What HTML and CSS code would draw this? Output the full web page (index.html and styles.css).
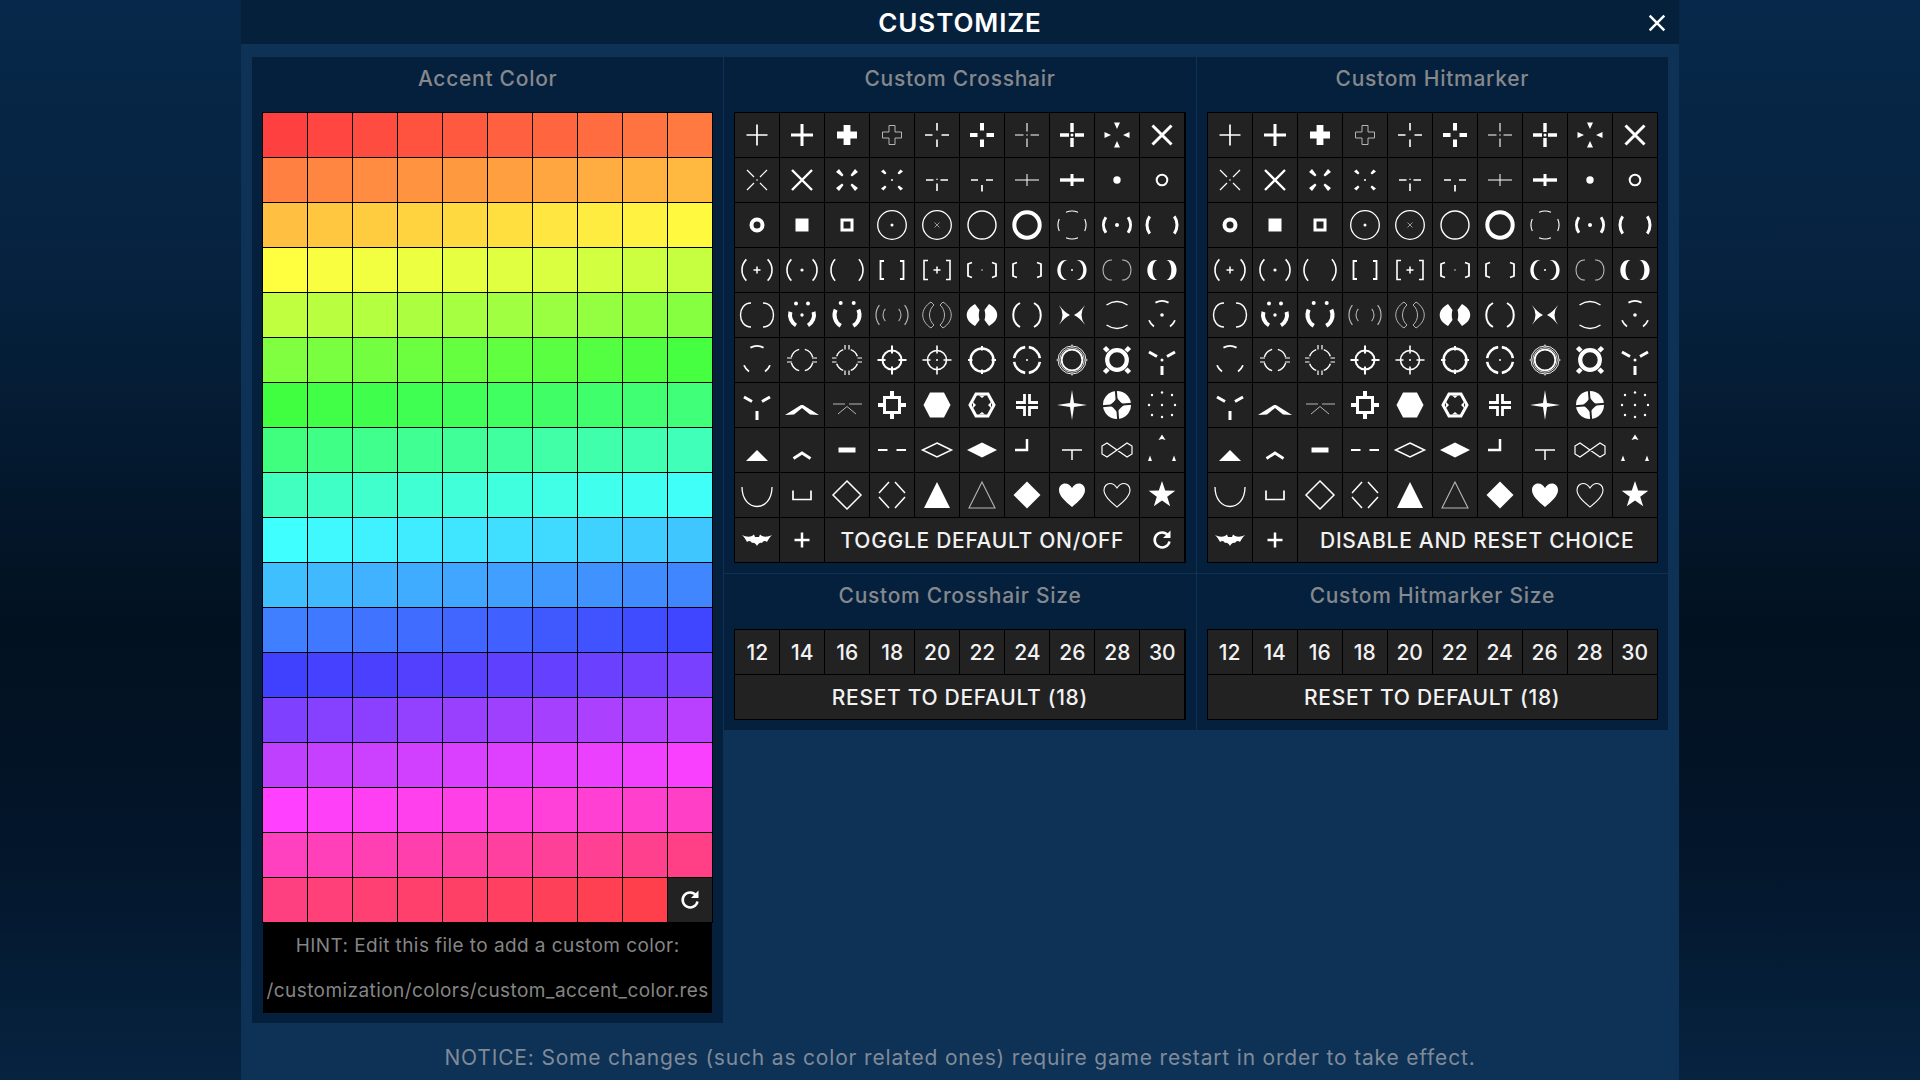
FILE: index.html
```html
<!DOCTYPE html>
<html>
  <head>
    <meta name="viewport" content="width=device-width,initial-scale=1.0">
    <title>Customize</title>
    <link rel="stylesheet" href="styles.css">
  </head>
  <body>
    <div class="dialog">
      <div class="titlebar">
        <h1>CUSTOMIZE</h1>
        <button class="close">
          <svg viewBox="-8 -8 16 16"><path d="M-6.5-6.5L6.5 6.5M6.5-6.5L-6.5 6.5"/></svg>
        </button>
      </div>
      <div class="content">
        <div class="columns">
          <div class="panel">
            <h2>Accent Color</h2>
            <div class="grid" id="colors"></div>
            <div class="hint">
              <p>HINT: Edit this file to add a custom color:</p>
              <p>/customization/colors/custom_accent_color.res</p>
            </div>
          </div>
          <div class="stack">
            <div class="panel">
              <h2>Custom Crosshair</h2>
              <div class="grid" id="crosshair"></div>
            </div>
            <div class="panel">
              <h2>Custom Crosshair Size</h2>
              <div class="grid" id="crosshair-size"></div>
            </div>
          </div>
          <div class="stack">
            <div class="panel">
              <h2>Custom Hitmarker</h2>
              <div class="grid" id="hitmarker"></div>
            </div>
            <div class="panel">
              <h2>Custom Hitmarker Size</h2>
              <div class="grid" id="hitmarker-size"></div>
            </div>
          </div>
        </div>
        <p class="notice">NOTICE: Some changes (such as color related ones) require game restart in order to take effect.</p>
      </div>
    </div>
    <script src="page.js"></script>
  </body>
</html>
```

FILE: styles.css
```css
body { margin: 0; height: 100vh; overflow: hidden; display: flex; justify-content: center; background: linear-gradient(180deg, #07284a, #06223f 25%, #021120 58%, #03152a 78%, #072340); font-family: Inter, "Liberation Sans", sans-serif; }
h1, h2, p { margin: 0; font-weight: normal; }
button { border: none; padding: 0; font: inherit; color: inherit; }

.dialog { width: 1438px; display: flex; flex-direction: column; }
.titlebar { height: 44px; flex: none; display: flex; align-items: center; justify-content: center; position: relative; background: #05203b; }
.titlebar h1 { font-size: 26px; font-weight: 600; color: #fff; letter-spacing: 0.9px; }
.close { position: absolute; right: 13px; top: 14px; width: 18px; height: 18px; background: none; }
.close svg { display: block; fill: none; stroke: #fff; stroke-width: 2.2; }

.content { flex: 1; display: flex; flex-direction: column; padding: 13px 11px 0; background: #0e3156; }
.columns { display: grid; grid-template-columns: repeat(3, 1fr); gap: 1px; align-items: start; }
.stack { display: flex; flex-direction: column; gap: 1px; }
.panel { padding: 0 11px 11px; background: #05203c; }
.panel h2 { height: 56px; display: flex; align-items: center; justify-content: center; padding-bottom: 13px; box-sizing: border-box; font-size: 21px; font-weight: 500; color: #85888c; letter-spacing: 0.72px; }

.grid { display: grid; grid-template-columns: repeat(10, 44px); grid-auto-rows: 44px; gap: 1px; background: #000; outline: 1px solid #000; }
.cell { display: flex; align-items: center; justify-content: center; background: #222; color: #f2f2f2; font-size: 21px; font-weight: 500; }
.swatch { display: block; }
.wide-7, .wide-8, .wide-10 { letter-spacing: 0.7px; }
.wide-7 { grid-column: span 7; }
.wide-8 { grid-column: span 8; }
.wide-10 { grid-column: span 10; }

.ico { width: 44px; height: 44px; fill: none; stroke: #fff; stroke-width: 1.5; }
.ico .solid { fill: #fff; stroke: none; }
.ico .dim { stroke: #b5b5b5; }

.hint { margin-top: 1px; margin-bottom: -1px; background: #000; color: #858585; font-size: 19px; font-weight: 500; line-height: 45px; text-align: center; white-space: nowrap; letter-spacing: 0.42px; }
.notice { flex: 1; display: flex; align-items: center; justify-content: center; padding-top: 12px; font-size: 21px; color: #7f8b99; letter-spacing: 0.82px; }
```

FILE: page.js
```js
// helpers for the icons, (0,0) is the middle of a cell
function line(d, w, cls) { return `<path d="${d}" stroke-width="${w}" class="${cls || ''}"/>`; }
function solid(d) { return `<path d="${d}" class="solid"/>`; }
function dot(x, y, r) { return `<circle cx="${x}" cy="${y}" r="${r}" class="solid"/>`; }
function ring(r, w, cls) { return `<circle r="${r}" stroke-width="${w}" class="${cls || ''}"/>`; }
function arc(r, a, b, w, cls) {
  var x1 = r * Math.cos(a * Math.PI / 180), y1 = r * Math.sin(a * Math.PI / 180);
  var x2 = r * Math.cos(b * Math.PI / 180), y2 = r * Math.sin(b * Math.PI / 180);
  return line(`M${x1.toFixed(2)} ${y1.toFixed(2)}A${r} ${r} 0 0 1 ${x2.toFixed(2)} ${y2.toFixed(2)}`, w, cls);
}
function parens(r, span, w, cls) { return arc(r, -span, span, w, cls) + arc(r, 180 - span, 180 + span, w, cls); }
function gapCross(a, b, w) { return line(`M${-a} 0H${-b}M${b} 0H${a}M0 ${-a}V${-b}M0 ${b}V${a}`, w); }
// crescent pair, inner is how far in the hollow side of the C reaches
function crescents(inner) {
  return solid(`M-4.500-10C-18-12-18 12-4.500 10C-${inner} 8-${inner}-8-4.500-10ZM4.500-10C18-12 18 12 4.500 10C${inner} 8 ${inner}-8 4.500-10Z`);
}
function threeArcs() { return arc(14, -118, -62, 1.8) + arc(14, 22, 55, 1.8) + arc(14, 125, 158, 1.8); }
function yShape() { return line('M-13-8L-5-3.500M13-8L5-3.500M0 6V15', 3); }

var HEART = 'M0 12C-7 6-13 1-13-5C-13-9-10-11.500-7-11.500C-4-11.500-1.500-9.500 0-7C1.500-9.500 4-11.500 7-11.500C10-11.500 13-9 13-5C13 1 7 6 0 12Z';
var BAT = 'M-15-5C-11-3-8-3-5-4L-3-5.500L-2-3H2L3-5.500L5-4C8-3 11-3 15-5C12-2 11 0 10 2C8 0 6 1 5 3C3 2 1 4 0 6C-1 4-3 2-5 3C-6 1-8 0-10 2C-11 0-12-2-15-5Z';
var REFRESH = line('M6.200-4.500A7.500 7.500 0 1 0 7.500 1.500', 2.5) + solid('M8.500-9.500V-2H1Z');
var PLUS = line('M-7.500 0H7.500M0-7.500V7.500', 2.5);

var ICONS = [
  // row 1
  line('M-10.500 0H10.500M0-10.500V10.500', 1.7),
  line('M-11 0H11M0-11V11', 3),
  line('M-10 0H10M0-10V10', 6.8),
  line('M-3-9.500H3V-3H9.500V3H3V9.500H-3V3H-9.500V-3H-3Z', 1, 'dim'),
  gapCross(12, 4.5, 1.6),
  gapCross(12, 4.5, 4),
  gapCross(12, 3.5, 1.1) + dot(0, 0, 0.7),
  gapCross(12, 3, 3.4) + dot(0, 0, 1.5),
  solid('M-3-12.500H3L0-6ZM-3 12.500H3L0 6ZM-12.500-3V3L-6 0ZM12.500-3V3L6 0Z'),
  line('M-9.500-9.500L9.500 9.500M9.500-9.500L-9.500 9.500', 3),
  // row 2
  line('M-10-10L-3-3M10-10L3-3M-10 10L-3 3M10 10L3 3', 1.2) + dot(0, 0, 0.8),
  line('M-10-10L10 10M10-10L-10 10', 2.4),
  solid('M-11-8L-8-11L-3.500-5L-5-3.500ZM11-8L8-11L3.500-5L5-3.500ZM-11 8L-8 11L-3.500 5L-5 3.500ZM11 8L8 11L3.500 5L5 3.500Z'),
  solid('M-11-8.500L-8.500-10.500L-5.500-7L-7-5.500ZM11-8.500L8.500-10.500L5.500-7L7-5.500ZM-11 8.500L-8.500 10.500L-5.500 7L-7 5.500ZM11 8.500L8.500 10.500L5.500 7L7 5.500Z') + dot(0, 0, 1),
  line('M-11 0H-3.500M3.500 0H11M0 3.500V11M0-1.200V-0.200', 1.6),
  line('M-11 0H-4M4 0H11M0 5V11.500', 1.7),
  line('M-12 0H12M0-6V6', 1),
  line('M-12 0H12', 3.4) + line('M0-6V6', 3),
  dot(0, 0, 3.7),
  ring(5.3, 2),
  // row 3
  ring(5.5, 4),
  solid('M-6.500-6.500H6.500V6.500H-6.500Z'),
  line('M-5-5H5V5H-5Z', 3),
  ring(14.3, 1.3) + dot(0, 0, 1.5),
  ring(14.3, 1.3) + line('M-2.500-2.500L2.500 2.500M2.500-2.500L-2.500 2.500', 0.8, 'dim'),
  ring(14, 1.4),
  ring(12.7, 4),
  arc(14, -115, -65, 1.1) + arc(14, 65, 115, 1.1) + arc(14, 155, 205, 1.1) + arc(14, -25, 25, 1.1),
  parens(13.5, 35, 3) + dot(0, 0, 2),
  parens(15, 35, 3),
  // row 4
  parens(15, 45, 1.6) + line('M-3.500 0H3.500M0-3.500V3.500', 1.5),
  parens(15, 45, 1.6) + dot(0, 0, 1.6),
  parens(16, 42, 1.6),
  line('M-8-9H-11.500V9H-8M8-9H11.500V9H8', 1.8),
  line('M-9-9.500H-13V9.500H-9M9-9.500H13V9.500H9', 1.6) + line('M-3.500 0H3.500M0-3.500V3.500', 1.5),
  line('M-10-7.500L-14-6V6L-10 7.500M10-7.500L14-6V6L10 7.500', 1.8) + dot(0, 0, 0.7),
  line('M-10-7.500L-14-6V6L-10 7.500M10-7.500L14-6V6L10 7.500', 1.8),
  crescents(13.5) + dot(0, 0, 1),
  line('M-5-10C-17-11-17 11-5 10M5-10C17-11 17 11 5 10', 1.1, 'dim'),
  crescents(11),
  // row 5
  line('M-6-12C-20-12-20 12-6 12M6-12C20-12 20 12 6 12', 1.4),
  arc(12, 120, 195, 4) + arc(12, -15, 60, 4) + dot(-6, -11.5, 2) + dot(6, -11.5, 2) + dot(0, 0, 1.7),
  arc(12.5, 120, 205, 4) + arc(12.5, -25, 60, 4) + dot(-6.3, -12, 2) + dot(6.7, -12, 2),
  parens(16, 38, 1.2, 'dim') + parens(9, 42, 1.1, 'dim'),
  line('M-6-13C-17-6-17 6-6 13L-3 10C-9 5-9-5-3-10ZM6-13C17-6 17 6 6 13L3 10C9 5 9-5 3-10Z', 1, 'dim'),
  solid('M-7-11C-18-5-18 5-7 11L-2.500 5C-3.500 2-3.500-2-2.500-5ZM7-11C18-5 18 5 7 11L2.500 5C3.500 2 3.500-2 2.500-5Z'),
  line('M-7-12C-16-7-16 7-7 12M7-12C16-7 16 7 7 12', 2),
  solid('M-13-10Q-8-3-2 0Q-8 3-13 10Q-6 0-13-10ZM13-10Q8-3 2 0Q8 3 13 10Q6 0 13-10Z'),
  line('M-10.500-10Q0-17 10.500-10M-10.500 10Q0 17 10.500 10', 1.5),
  threeArcs() + dot(0, 0, 1.8),
  // row 6
  threeArcs(),
  arc(11, 195, 255, 1.5) + arc(11, 285, 345, 1.5) + arc(11, 15, 75, 1.5) + arc(11, 105, 165, 1.5) + line('M-15-2H-10M-15 2H-10M15-2H10M15 2H10', 1.2),
  arc(11, 200, 250, 1.5) + arc(11, 290, 340, 1.5) + arc(11, 20, 70, 1.5) + arc(11, 110, 160, 1.5) + line('M-15-2H-10.500M-15 2H-10.500M15-2H10.500M15 2H10.500M-2-15V-10.500M2-15V-10.500M-2 15V10.500M2 15V10.500', 1.2),
  ring(9.5, 2) + gapCross(14.5, 6.5, 2),
  ring(9.5, 1.6) + gapCross(14.5, 6.5, 1.6) + dot(0, 0, 1),
  ring(11.5, 2.4) + gapCross(14, 9.5, 2),
  arc(13, 8, 82, 2.6) + arc(13, 98, 172, 2.6) + arc(13, 188, 262, 2.6) + arc(13, 278, 352, 2.6) + dot(0, 0, 1),
  ring(14, 0.9) + ring(12.3, 0.8) + ring(10.3, 1.8) + gapCross(15.5, 14, 1),
  ring(9.8, 4.2) + line('M-9-9L-12.500-12.500M9-9L12.500-12.500M-9 9L-12.500 12.500M9 9L12.500 12.500', 4.5),
  yShape() + dot(0, 0, 1.5),
  // row 7
  yShape(),
  solid('M-17 10L-1 0H1L17 10L8 9.500L0 3L-8 9.500Z'),
  line('M-14-1H-2M2-1H15M-9 9L0 1.500L9 9', 1, 'dim'),
  line('M-7.500-7.500H7.500V7.500H-7.500Z', 3) + line('M0-14V-9M0 14V9M-14 0H-9M14 0H9', 4),
  solid('M-7-12.500H7L13.500 0L7 12.500H-7L-13.500 0Z'),
  line('M-6-11H6L12 0L6 11H-6L-12 0Z', 3) + solid('M-3-9.500L0-7L3-9.500ZM-3 9.500L0 7L3 9.500ZM-9-3L-6 0L-9 3ZM9-3L6 0L9 3Z'),
  line('M-2.500-11V-2.500H-11M2.500-11V-2.500H11M-2.500 11V2.500H-11M2.500 11V2.500H11', 2.8),
  solid('M0-15L2-2L15 0L2 2L0 15L-2 2L-15 0L-2-2Z'),
  `<circle r="14" class="solid"/><path d="M-1.200-15L1.200 15M-15 1.200L15-1.200" stroke="#222" stroke-width="2"/><path d="M0-7Q3-3 7 0Q3 3 0 7Q-3 3-7 0Q-3-3 0-7Z" fill="#222" stroke="none"/>`,
  [[-10, -10], [0, -12.5], [10, -10], [-13, 0], [0, 0], [13, 0], [-10, 10], [0, 12], [10, 10]].map(function (p) { return dot(p[0], p[1], 1.2); }).join(''),
  // row 8
  solid('M-11 11L0 0L11 11Z'),
  line('M-8.500 8.500L0 3L8.500 8.500', 2.8),
  solid('M-8.500-2.500H8.500V2.500H-8.500Z'),
  line('M-14 0H-4.500M4.500 0H14', 2),
  line('M0-7L14.500 0L0 7L-14.500 0Z', 1.5),
  solid('M0-7.500L15 0L0 7.500L-15 0Z'),
  line('M-12 0H0V-11', 2.5),
  line('M-10 0H10M0 0V10', 1.5),
  line('M-15-4L-10-7L10 7L15 4V-4L10-7L-10 7L-15 4Z', 1.2),
  solid('M0-15.500L3.500-10L0-11L-3.500-10ZM-12 5.500L-10 11H-14ZM12 5.500L14 11H10Z'),
  // row 9
  line('M-15-8C-15 18 15 18 15-8', 1.3),
  line('M-9-4.500V4.500H9V-4.500', 1.7),
  line('M0-14L14 0L0 14L-14 0Z', 1.5),
  line('M-13-2L-3-13M3-13L13-2M13 2L3 13M-3 13L-13 2', 1.5),
  solid('M0-13L13 13H-13Z'),
  line('M0-13L13 13H-13Z', 1.1, 'dim'),
  solid('M0-13.500L13.500 0L0 13.500L-13.500 0Z'),
  solid(HEART),
  line(HEART, 1.1),
  solid('M0-14L3.200-4.400L13.300-4.300L5.200 1.700L8.200 11.300L0 5.500L-8.200 11.300L-5.200 1.700L-13.300-4.300L-3.200-4.400Z')
];

function svg(inner) { return `<svg class="ico" viewBox="-22 -22 44 44">${inner}</svg>`; }
function cell(inner, cls) { return `<button class="cell ${cls || ''}">${inner}</button>`; }

function iconGrid(id, lastRow) {
  document.getElementById(id).innerHTML = ICONS.map(function (i) { return cell(svg(i)); }).join('') + lastRow;
}

// hue walks round the wheel, 2 degrees per swatch
var colors = '';
for (var i = 0; i < 179; i++) {
  colors += `<div class="swatch" style="background: hsl(${i * 2}, 100%, 62.5%)"></div>`;
}
document.getElementById('colors').innerHTML = colors + cell(svg(REFRESH));

iconGrid('crosshair', cell(svg(solid(BAT))) + cell(svg(PLUS)) + cell('TOGGLE DEFAULT ON/OFF', 'wide-7') + cell(svg(REFRESH)));
iconGrid('hitmarker', cell(svg(solid(BAT))) + cell(svg(PLUS)) + cell('DISABLE AND RESET CHOICE', 'wide-8'));

['crosshair-size', 'hitmarker-size'].forEach(function (id) {
  var html = '';
  for (var n = 12; n <= 30; n += 2) html += cell(n);
  document.getElementById(id).innerHTML = html + cell('RESET TO DEFAULT (18)', 'wide-10');
});
```
